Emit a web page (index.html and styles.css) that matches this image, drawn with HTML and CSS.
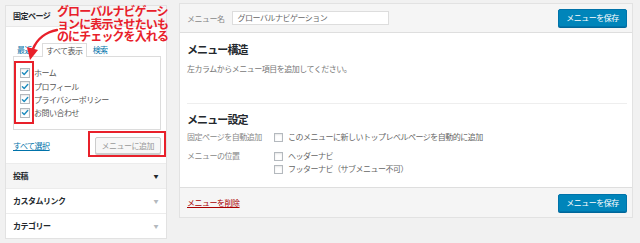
FILE: index.html
```html
<!DOCTYPE html>
<html lang="ja">
<head>
<meta charset="utf-8">
<link rel="stylesheet" href="styles.css">
</head>
<body>
<div class="page">
  <div class="side">
    <div class="acc-head">固定ページ</div>
    <div class="acc-body">
      <div class="tabs">
        <span class="tab link">最近</span>
        <span class="tab active">すべて表示</span>
        <span class="tab link">検索</span>
      </div>
      <div class="tab-panel">
        <label class="item"><span class="cb checked"><svg viewBox="0 0 10 10"><path d="M1.8 5.2 L4 7.4 L8.4 2.4" /></svg></span>ホーム</label>
        <label class="item"><span class="cb checked"><svg viewBox="0 0 10 10"><path d="M1.8 5.2 L4 7.4 L8.4 2.4" /></svg></span>プロフィール</label>
        <label class="item"><span class="cb checked"><svg viewBox="0 0 10 10"><path d="M1.8 5.2 L4 7.4 L8.4 2.4" /></svg></span>プライバシーポリシー</label>
        <label class="item"><span class="cb checked"><svg viewBox="0 0 10 10"><path d="M1.8 5.2 L4 7.4 L8.4 2.4" /></svg></span>お問い合わせ</label>
      </div>
      <div class="add-row">
        <span class="select-all">すべて選択</span>
        <span class="btn-grey">メニューに追加</span>
      </div>
    </div>
    <div class="acc-row dark">投稿<span class="caret">▼</span></div>
    <div class="acc-row">カスタムリンク<span class="caret">▼</span></div>
    <div class="acc-row">カテゴリー<span class="caret">▼</span></div>
    <div class="hl hl-checks"></div>
    <div class="hl hl-button"></div>
  </div>

  <div class="main">
    <div class="main-head">
      <span class="name-label">メニュー名</span>
      <span class="name-input">グローバルナビゲーション</span>
      <span class="btn-blue">メニューを保存</span>
    </div>
    <div class="main-body">
      <div class="h-struct">メニュー構造</div>
      <div class="desc">左カラムからメニュー項目を追加してください。</div>
      <div class="sep"></div>
      <div class="h-settings">メニュー設定</div>
      <div class="settings">
        <div class="s-label">固定ページを自動追加</div>
        <div class="s-opts">
          <div class="opt"><span class="cb"></span>このメニューに新しいトップレベルページを自動的に追加</div>
        </div>
        <div class="s-label">メニューの位置</div>
        <div class="s-opts">
          <div class="opt"><span class="cb"></span>ヘッダーナビ</div>
          <div class="opt"><span class="cb"></span>フッターナビ（サブメニュー不可）</div>
        </div>
      </div>
    </div>
    <div class="main-foot">
      <span class="delete">メニューを削除</span>
      <span class="btn-blue">メニューを保存</span>
    </div>
  </div>

  <div class="note">グローバルナビゲーシ<br>ョンに表示させたいも<br>のにチェックを入れる</div>
  <svg class="arrow" viewBox="0 0 80 70" width="80" height="70">
    <path d="M57 30 C46 32 37 39 33 49" fill="none" stroke="#e8202a" stroke-width="2.4" stroke-linecap="round"/>
    <polygon points="30,60 27,47 38,50" fill="#e8202a"/>
  </svg>
</div>
</body>
</html>
```

FILE: styles.css
```css
* { box-sizing: border-box; }
html, body { margin: 0; padding: 0; }
body {
  background: #f1f1f1;
  font-family: "Noto Sans CJK JP", "Noto Sans", sans-serif;
  font-size: 8px;
  letter-spacing: -0.5px;
  color: #555;
  width: 640px;
  height: 243px;
  overflow: hidden;
}
.page {
  position: relative;
  display: flex;
  align-items: flex-start;
  gap: 12px;
  padding: 3px 0 0 5px;
}

/* left column */
.side {
  position: relative;
  width: 162px;
  margin-top: 2px;
  background: #fff;
  border: 1px solid #e2e2e2;
}
.acc-head {
  height: 21px;
  line-height: 19px;
  padding-left: 7px;
  font-weight: bold;
  color: #23282d;
  background: #f5f5f5;
  border-bottom: 1px solid #e8e8e8;
}
.acc-body {
  padding: 16px 5px 9px 7px;
}
.tabs {
  display: flex;
  align-items: flex-end;
  height: 13px;
  padding-left: 0;
}
.tab {
  line-height: 12px;
  padding: 0 4px;
}
.tab.link { color: #0073aa; }
.tab.active {
  background: #fff;
  border: 1px solid #dcdcdc;
  border-bottom: none;
  height: 14px;
  line-height: 13px;
  margin: 0 2px 0 6px;
  padding: 0 3px;
  position: relative;
  top: 1px;
  color: #555;
}
.tab-panel {
  border: 1px solid #dcdcdc;
  padding: 9px 0 9px 6px;
  display: flex;
  flex-direction: column;
}
.item {
  display: flex;
  align-items: center;
  height: 13.4px;
  color: #555;
}
.cb {
  width: 10px;
  height: 10px;
  flex: none;
  border: 1px solid #b4b9be;
  background: #fff;
  box-shadow: inset 0 1px 2px rgba(0,0,0,0.1);
  margin-right: 4px;
  display: flex;
  align-items: center;
  justify-content: center;
}
.cb svg { width: 9px; height: 9px; }
.cb svg path {
  fill: none;
  stroke: #1e8cbe;
  stroke-width: 1.8;
  stroke-linecap: round;
  stroke-linejoin: round;
}
.add-row {
  display: flex;
  justify-content: space-between;
  align-items: center;
  margin-top: 7px;
}
.select-all {
  color: #0073aa;
  text-decoration: underline;
}
.btn-grey {
  height: 17px;
  line-height: 15px;
  padding: 0 6px;
  border: 1px solid #ccc;
  border-radius: 2px;
  background: #f7f7f7;
  color: #999;
  box-shadow: 0 1px 0 #ccc;
}
.acc-row {
  height: 25px;
  line-height: 24px;
  padding: 0 8px 0 7px;
  border-top: 1px solid #ececec;
  font-weight: bold;
  color: #23282d;
  display: flex;
  justify-content: space-between;
}
.acc-row.dark { background: #f5f5f5; }
.caret {
  font-size: 5px;
  color: #b4b9be;
}
.acc-row.dark .caret { color: #23282d; }
.hl {
  position: absolute;
  border: 2px solid #e8202a;
}
.hl-checks { left: 8px; top: 55px; width: 20px; height: 63px; }
.hl-button { left: 82px; top: 125px; width: 78px; height: 26px; }

/* main column */
.main {
  width: 454px;
  background: #fff;
  border: 1px solid #e2e2e2;
}
.main-head {
  height: 29px;
  display: flex;
  align-items: center;
  padding: 0 5px 0 7px;
  background: #f5f5f5;
  border-bottom: 1px solid #dedede;
}
.name-label { color: #888; }
.name-input {
  margin-left: 7px;
  width: 157px;
  height: 14px;
  line-height: 12px;
  padding: 0 5px;
  background: #fff;
  border: 1px solid #ddd;
  color: #666;
}
.btn-blue {
  margin-left: auto;
  width: 69px;
  height: 18px;
  line-height: 16px;
  text-align: center;
  background: #0085ba;
  border: 1px solid #0073aa;
  border-radius: 2px;
  color: #fff;
  box-shadow: 0 1px 0 #006799;
}
.main-body {
  padding: 9px 5px 12px 7px;
}
.h-struct {
  font-size: 11px;
  font-weight: bold;
  line-height: 14px;
  letter-spacing: -0.9px;
  color: #23282d;
}
.desc {
  margin-top: 7px;
  line-height: 12px;
  color: #777;
}
.sep {
  margin-top: 28px;
  border-top: 1px solid #eee;
}
.h-settings {
  margin-top: 8px;
  font-size: 11px;
  font-weight: bold;
  line-height: 14px;
  letter-spacing: -0.9px;
  color: #23282d;
}
.settings {
  margin-top: 5px;
  display: grid;
  grid-template-columns: 87px 1fr;
  row-gap: 7px;
}
.s-label {
  line-height: 12px;
  color: #888;
}
.s-opts {
  display: flex;
  flex-direction: column;
  gap: 1px;
}
.opt {
  display: flex;
  align-items: center;
  line-height: 12px;
  color: #666;
}
.opt .cb { width: 9px; height: 9px; margin-right: 5px; }
.main-foot {
  height: 30px;
  display: flex;
  align-items: center;
  padding: 0 5px 0 7px;
  background: #f5f5f5;
  border-top: 1px solid #dedede;
}
.delete {
  color: #a00;
  text-decoration: underline;
}

/* annotation overlay */
.note {
  position: absolute;
  left: 57px;
  top: 5px;
  font-size: 12px;
  line-height: 12.5px;
  font-weight: bold;
  letter-spacing: -0.9px;
  color: #e8202a;
  white-space: nowrap;
}
.arrow {
  position: absolute;
  left: 0;
  top: 0;
}
```
